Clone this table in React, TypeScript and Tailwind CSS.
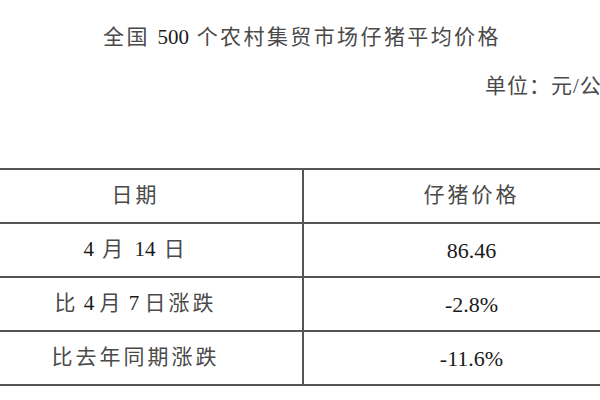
const serif = "font-['Liberation_Serif','Noto_Sans_CJK_SC',serif]";

type Row = { label: React.ReactNode; value: string };

function Num({ children }: { children: React.ReactNode }) {
  return <span className="text-[#1a1a1a] tracking-normal">{children}</span>;
}

const rows: Row[] = [
  {
    label: (
      <>
        <Num>4</Num> 月 <Num>14</Num> 日
      </>
    ),
    value: "86.46",
  },
  {
    label: (
      <>
        比<Num> 4 </Num>月<Num> 7 </Num>日涨跌
      </>
    ),
    value: "-2.8%",
  },
  { label: "比去年同期涨跌", value: "-11.6%" },
];

export default function App() {
  return (
    <div className={`w-[600px] h-[400px] overflow-hidden bg-white ${serif}`}>
      <div className="mt-[26px] h-[22px] pl-[4px] text-center text-[21px] leading-[22px] tracking-[2.4px] text-[#4a4a4a]">
        全国 <Num>500</Num> 个农村集贸市场仔猪平均价格
      </div>

      <div className="mt-[27px] h-[22px] whitespace-nowrap pl-[485px] text-[21px] leading-[22px] tracking-[1px] text-[#4a4a4a]">
        单位：元/公斤
      </div>

      <table className="mt-[71px] ml-[-31px] w-[670px] border-collapse text-[21px] text-[#4a4a4a]">
        <tbody>
          <tr className="h-[54px]">
            <td className="w-[334px] border-y-2 border-r-2 border-[#555] text-center tracking-[3px]">
              日期
            </td>
            <td className="w-[336px] border-y-2 border-[#555] text-center tracking-[3px]">
              仔猪价格
            </td>
          </tr>
          {rows.map((r, i) => (
            <tr key={i} className="h-[54px]">
              <td className="border-y-2 border-r-2 border-[#555] text-center tracking-[3px]">
                {r.label}
              </td>
              <td className="border-y-2 border-[#555] text-center text-[22px] text-[#1a1a1a]">
                {r.value}
              </td>
            </tr>
          ))}
        </tbody>
      </table>
    </div>
  );
}
